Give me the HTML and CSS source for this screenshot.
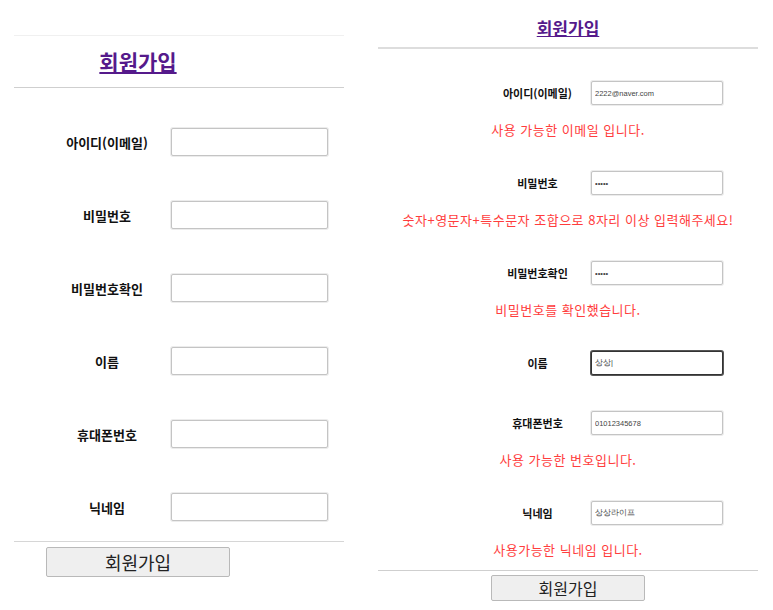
FILE: index.html
```html
<!DOCTYPE html>
<html lang="ko">
<head>
    <meta charset="UTF-8">
    <meta name="viewport" content="width=device-width, initial-scale=1.0">
    <title>회원가입</title>
    <link rel="stylesheet" href="styles.css">
</head>
<body>
    <div class="page">
        <!-- 빈 폼 -->
        <section class="panel panel-empty">
            <div class="head">
                <h1><a href="#">회원가입</a></h1>
            </div>
            <form class="form">
                <div class="field"><label>아이디(이메일)</label><input type="text"></div>
                <div class="field"><label>비밀번호</label><input type="password"></div>
                <div class="field"><label>비밀번호확인</label><input type="password"></div>
                <div class="field"><label>이름</label><input type="text"></div>
                <div class="field"><label>휴대폰번호</label><input type="text"></div>
                <div class="field"><label>닉네임</label><input type="text"></div>
            </form>
            <button type="button" class="submit">회원가입</button>
        </section>

        <!-- 입력 완료된 폼 -->
        <section class="panel panel-filled">
            <div class="head">
                <h1><a href="#">회원가입</a></h1>
            </div>
            <form class="form">
                <div class="row">
                    <div class="field"><label>아이디(이메일)</label><input type="text" value="2222@naver.com"></div>
                    <p class="msg">사용 가능한 이메일 입니다.</p>
                </div>
                <div class="row">
                    <div class="field"><label>비밀번호</label><input type="password" value="12345"></div>
                    <p class="msg">숫자+영문자+특수문자 조합으로 8자리 이상 입력해주세요!</p>
                </div>
                <div class="row">
                    <div class="field"><label>비밀번호확인</label><input type="password" value="12345"></div>
                    <p class="msg">비밀번호를 확인했습니다.</p>
                </div>
                <div class="row no-msg">
                    <div class="field"><label>이름</label><input type="text" class="focused" value="상상|"></div>
                </div>
                <div class="row">
                    <div class="field"><label>휴대폰번호</label><input type="text" value="01012345678"></div>
                    <p class="msg">사용 가능한 번호입니다.</p>
                </div>
                <div class="row">
                    <div class="field"><label>닉네임</label><input type="text" value="상상라이프"></div>
                    <p class="msg">사용가능한 닉네임 입니다.</p>
                </div>
            </form>
            <button type="button" class="submit">회원가입</button>
        </section>
    </div>
</body>
</html>
```

FILE: styles.css
```css
body {
    margin: 0;
    font-family: "Noto Sans CJK KR", "Noto Sans", sans-serif;
    color: #111;
    background: #fff;
}

.page {
    display: flex;
    align-items: flex-start;
}

.panel h1 {
    margin: 0;
    font-weight: bold;
}
.panel h1 a {
    color: #551a8b;
}

label {
    font-weight: bold;
    text-align: center;
}

input {
    box-sizing: border-box;
    border: 1px solid #c4c4c4;
    box-shadow: 0 0 0 1px #ececec;
    border-radius: 2px;
    padding: 0 3px;
    font-family: "Liberation Sans", Arial, sans-serif;
    color: #444;
    background: #fff;
}
input.focused {
    border-color: #333;
    box-shadow: 0 0 0 1px #555;
}

.submit {
    display: block;
    background-color: #efefef;
    border: 1px solid #b9b9b9;
    border-radius: 2px;
    font-family: "Noto Sans CJK KR", sans-serif;
    color: #222;
    padding: 0;
}

/* 왼쪽 */
.panel-empty {
    width: 330px;
    margin-left: 14px;
    margin-top: 35px;
    border-top: 1px solid #f0f0f0;
}
.panel-empty .head {
    text-align: center;
    border-bottom: 1px solid #cfcfcf;
}
.panel-empty h1 {
    width: 248px;
    font-size: 21px;
    line-height: 51px;
}
.panel-empty .form {
    display: flex;
    flex-direction: column;
    gap: 45px;
    padding: 40px 0 20px 29px;
    border-bottom: 1px solid #d6d6d6;
}
.panel-empty .field {
    display: grid;
    grid-template-columns: 128px 157px;
    align-items: center;
}
.panel-empty label {
    font-size: 13px;
}
.panel-empty input {
    height: 28px;
}
.panel-empty .submit {
    width: 184px;
    height: 30px;
    margin: 5px 0 0 32px;
    font-size: 18px;
}

/* 오른쪽 */
.panel-filled {
    width: 380px;
    margin-left: 34px;
}
.panel-filled .head {
    text-align: center;
    border-bottom: 2px solid #dddddd;
    padding-top: 8px;
}
.panel-filled h1 {
    font-size: 17px;
    line-height: 39px;
}
.panel-filled .form {
    display: flex;
    flex-direction: column;
    gap: 16px;
    padding-top: 32px;
    border-bottom: 1px solid #cfcfcf;
}
.panel-filled .field {
    display: grid;
    grid-template-columns: 107px 132px;
    padding-left: 106px;
    align-items: center;
}
.panel-filled label {
    font-size: 11px;
}
.panel-filled input {
    height: 24px;
    font-size: 7.5px;
}
.panel-filled .row.no-msg {
    padding-bottom: 20px;
}
.msg {
    margin: 0;
    padding: 15px 0;
    line-height: 20px;
    text-align: center;
    font-size: 13px;
    color: #ff3d3d;
    letter-spacing: 0.5px;
}
.panel-filled .row:last-child .msg {
    padding-bottom: 10px;
}
.panel-filled .submit {
    width: 154px;
    height: 26px;
    margin: 4px auto 0;
    font-size: 16px;
}
```
